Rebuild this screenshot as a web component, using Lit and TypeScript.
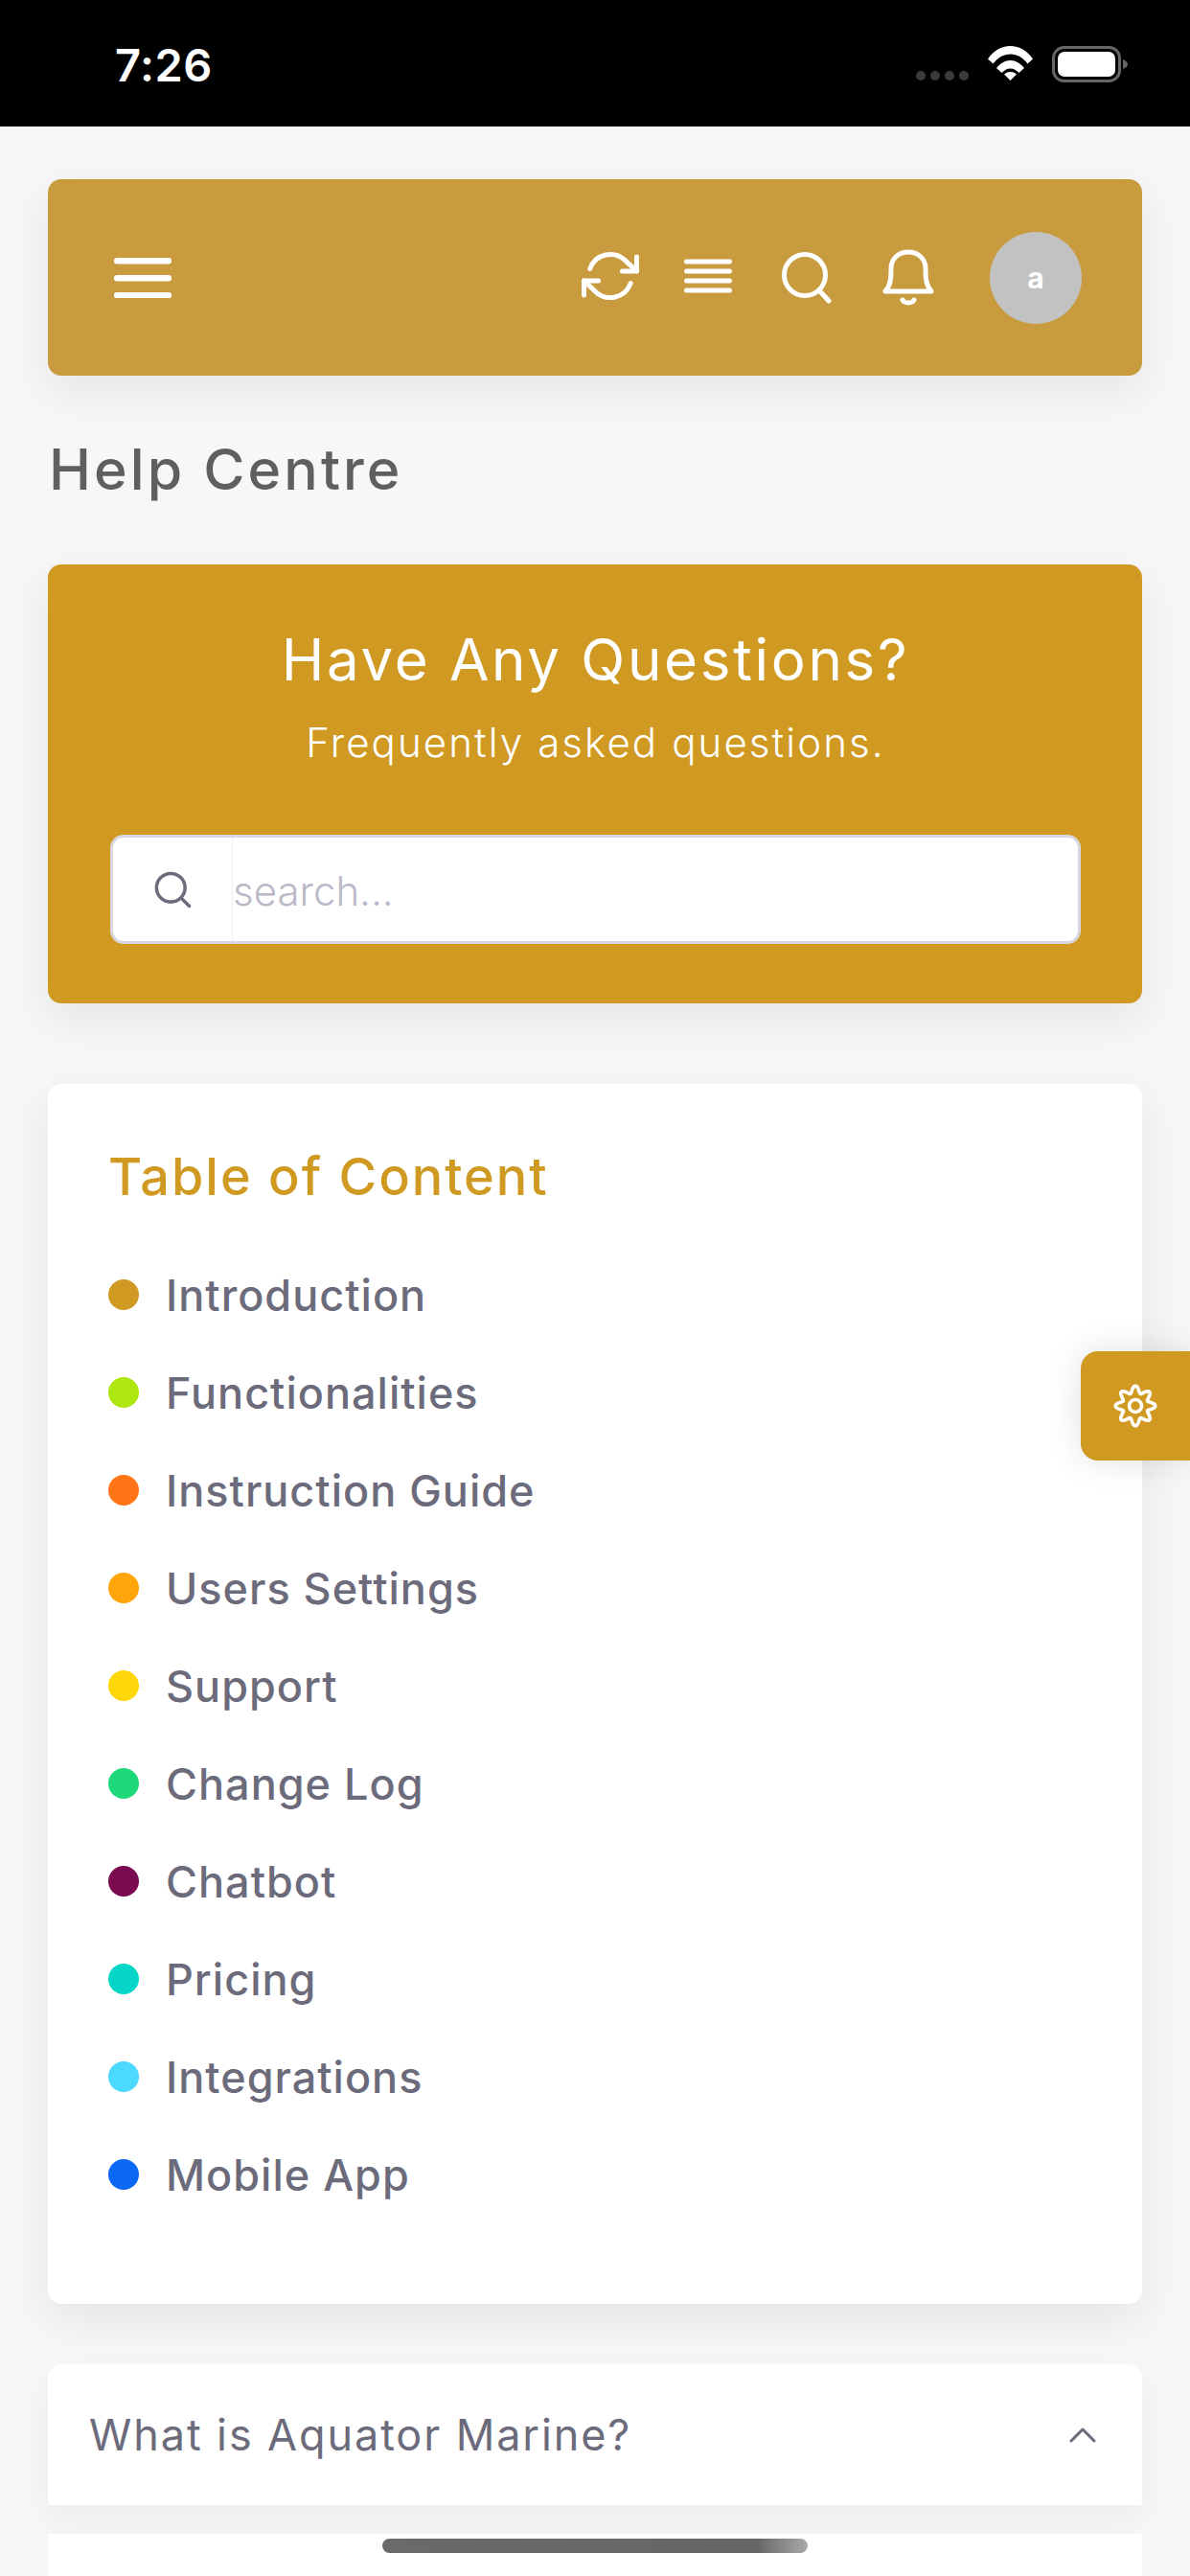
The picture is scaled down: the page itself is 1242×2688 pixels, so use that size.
import { LitElement, html, css, svg } from "lit";
import { customElement } from "lit/decorators.js";

const TOC: [string, string][] = [
  ["Introduction", "#d09a22"],
  ["Functionalities", "#aee60f"],
  ["Instruction Guide", "#ff7518"],
  ["Users Settings", "#ffa70a"],
  ["Support", "#ffd60a"],
  ["Change Log", "#1ed97a"],
  ["Chatbot", "#7a0a50"],
  ["Pricing", "#06d6c8"],
  ["Integrations", "#4cd9ff"],
  ["Mobile App", "#0a68f5"],
];

function gearPath(): string {
  const pts: string[] = [];
  const n = 96;
  for (let i = 0; i < n; i++) {
    const t = (i / n) * Math.PI * 2;
    const r = 17.2 + 3.6 * Math.cos(8 * t);
    pts.push(`${(24 + r * Math.sin(t)).toFixed(2)} ${(24 - r * Math.cos(t)).toFixed(2)}`);
  }
  return "M" + pts.join("L") + "Z";
}

@customElement("app-root")
export class AppRoot extends LitElement {
  static styles = css`
    :host {
      display: block;
      position: relative;
      width: 1242px;
      height: 2688px;
      overflow: hidden;
      background: #f7f7f7;
      font-family: Inter, "Noto Sans", sans-serif;
      color: #6c6b7b;
    }
    .status {
      height: 132px;
      background: #000;
      display: flex;
      align-items: center;
      padding: 0 64px 0 120px;
      box-sizing: border-box;
    }
    .time {
      color: #fff;
      font: 600 47px/1 Inter, "Liberation Sans", sans-serif;
      letter-spacing: 0.5px;
      margin-top: 2px;
      flex: 1;
    }
    .sig { display: flex; gap: 5px; margin-top: 26px; margin-right: 20px; }
    .sig i { width: 10px; height: 10px; border-radius: 50%; background: #3b3b3b; display: block; }
    .wifi { width: 47px; height: 36px; margin-right: 20px; display: block; }
    .batt { width: 80px; height: 38px; display: block; margin-top: 1px; }
    main {
      padding: 55px 50px 0;
      display: flex;
      flex-direction: column;
    }
    .header {
      height: 205px;
      background: #c99b3f;
      border-radius: 14px;
      box-shadow: 0 16px 50px rgba(0, 0, 0, 0.08);
      display: flex;
      align-items: center;
      padding: 0 63px 0 69px;
    }
    .burger { width: 60px; height: 42px; display: block; margin-right: auto; }
    .ic { display: block; }
    .refresh { width: 60px; height: 60px; margin-right: 47px; margin-top: -3px; }
    .lines { width: 50px; height: 40px; margin-right: 52px; margin-top: -3px; }
    .search { width: 52px; height: 54px; margin-right: 53px; }
    .bell { width: 54px; height: 60px; margin-right: 58px; }
    .avatar {
      width: 96px;
      height: 96px;
      border-radius: 50%;
      background: #c2c2c2;
      color: #fff;
      font: 700 30px/96px Inter, sans-serif;
      text-align: center;
    }
    h1 {
      margin: 60px 0 0 1px;
      font-weight: 450;
      font-size: 59px;
      line-height: 76px;
      letter-spacing: 3.1px;
      color: #5f5f5f;
    }
    .hero {
      margin-top: 61px;
      height: 458px;
      box-sizing: border-box;
      background: #d09a22;
      border-radius: 14px;
      box-shadow: 0 16px 50px rgba(0, 0, 0, 0.08);
      padding: 62px 64px 0 65px;
      color: #fff;
      text-align: center;
    }
    .hero h2 {
      margin: 0;
      font-weight: 400;
      font-size: 60px;
      line-height: 74px;
      letter-spacing: 2.7px;
    }
    .hero p {
      margin: 21px 0 0;
      font-weight: 300;
      font-size: 42px;
      line-height: 58px;
      letter-spacing: 2.1px;
    }
    .searchbox {
      margin-top: 67px;
      height: 114px;
      box-sizing: border-box;
      background: #fff;
      border: 3px solid #d8d6e0;
      border-radius: 14px;
      display: flex;
      align-items: center;
      overflow: hidden;
    }
    .addon {
      width: 125px;
      height: 100%;
      border-right: 1px solid #efeff3;
      display: flex;
      align-items: center;
      justify-content: center;
      box-sizing: border-box;
      flex: none;
    }
    .addon svg { width: 42px; height: 42px; display: block; }
    .ph { font-weight: 300; font-size: 42px; color: #b9b9c8; margin-top: 2px; }
    .toc {
      margin-top: 84px;
      height: 1273px;
      box-sizing: border-box;
      background: #fff;
      border-radius: 14px;
      box-shadow: 0 16px 50px rgba(0, 0, 0, 0.08);
      padding: 62px 63px 0;
    }
    .toc h3 {
      margin: 0 0 37px;
      font-weight: 450;
      font-size: 54px;
      line-height: 70px;
      letter-spacing: 2px;
      color: #d09a22;
    }
    .toc ul {
      list-style: none;
      margin: 0;
      padding: 0;
      display: flex;
      flex-direction: column;
    }
    .toc li {
      height: 102px;
      display: flex;
      align-items: center;
      gap: 28px;
      font-weight: 450;
      font-size: 45px;
      letter-spacing: 1px;
    }
    .toc li i { width: 32px; height: 32px; border-radius: 50%; display: block; flex: none; }
    .faq {
      margin-top: 63px;
      height: 147px;
      box-sizing: border-box;
      background: #fff;
      border-radius: 14px 14px 0 0;
      box-shadow: 0 15px 40px rgba(0, 0, 0, 0.05);
      display: flex;
      align-items: center;
      justify-content: space-between;
      padding: 0 48px 0 43px;
      font-size: 45px;
      letter-spacing: 1.9px;
    }
    .faq svg { width: 28px; height: 18px; display: block; }
    .faq.next { margin-top: 30px; border-radius: 0; box-shadow: none; }
    .tab {
      position: absolute;
      right: 0;
      top: 1410px;
      width: 114px;
      height: 114px;
      background: #d09a22;
      border-radius: 18px 0 0 18px;
      box-shadow: 0 0 36px rgba(0, 0, 0, 0.12);
      display: flex;
      align-items: center;
      justify-content: center;
    }
    .tab svg { width: 48px; height: 48px; display: block; }
    .home {
      position: absolute;
      left: 399px;
      top: 2649px;
      width: 444px;
      height: 15px;
      border-radius: 8px;
      background: linear-gradient(90deg, #6a6a6a 0%, #666 88%, #aaa 100%);
    }
  `;

  render() {
    return html`
      <div class="status">
        <div class="time">7:26</div>
        <div class="sig"><i></i><i></i><i></i><i></i></div>
        <svg class="wifi" viewBox="0 0 47 36" fill="#fff">
          <path d="M0 13.500C6 5 14 0 23.500 0S41 5 47 13.500L41.500 18.500C36.500 12 30.500 8.500 23.500 8.500S10.500 12 5.500 18.500Z"/>
          <path d="M9 23C13 18 18 15 23.500 15S34 18 38 23L32.500 28C30 25.300 27 23.500 23.500 23.500S17 25.300 14.500 28Z"/>
          <path d="M17 29.500C19 27.800 21 27 23.500 27S28 27.800 30 29.500L23.500 36Z"/>
        </svg>
        <svg class="batt" viewBox="0 0 80 38">
          <rect x="1.500" y="1.500" width="69" height="35" rx="11" fill="none" stroke="#666" stroke-width="3"/>
          <rect x="6" y="6" width="60" height="26" rx="7" fill="#fff"/>
          <path d="M74 14C77 15 79 17 79 19S77 23 74 24Z" fill="#666"/>
        </svg>
      </div>
      <main>
        <div class="header">
          <svg class="burger" viewBox="0 0 60 42" fill="#fff">
            <rect y="0" width="60" height="6.500" rx="3"/>
            <rect y="18" width="60" height="6.500" rx="3"/>
            <rect y="36" width="60" height="6.500" rx="3"/>
          </svg>
          <svg class="ic refresh" viewBox="0 0 24 24" fill="none" stroke="#fff" stroke-width="2" stroke-linecap="round" stroke-linejoin="round">
            <polyline points="23 4 23 10 17 10"/>
            <polyline points="1 20 1 14 7 14"/>
            <path d="M3.510 9a9 9 0 0 1 14.850-3.360L23 10M1 14l4.640 4.360A9 9 0 0 0 20.490 15"/>
          </svg>
          <svg class="ic lines" viewBox="0 0 50 40" fill="none" stroke="#fff" stroke-width="5" stroke-linecap="round">
            <path d="M2.500 5H47.500M2.500 15H47.500M2.500 25H47.500M2.500 35H47.500"/>
          </svg>
          <svg class="ic search" viewBox="0 0 52 54" fill="none" stroke="#fff" stroke-width="5" stroke-linecap="round">
            <circle cx="24" cy="24" r="21.500"/>
            <path d="M39 40L49 51"/>
          </svg>
          <svg class="ic bell" viewBox="0 0 54 60" fill="none" stroke="#fff" stroke-width="5" stroke-linecap="round" stroke-linejoin="round">
            <path d="M3 44H51C45 37 45 29 45 20C45 10 37 3 27 3S9 10 9 20C9 29 9 37 3 44Z"/>
            <path d="M21 53C23 57 31 57 33 53"/>
          </svg>
          <div class="avatar">a</div>
        </div>
        <h1>Help Centre</h1>
        <section class="hero">
          <h2>Have Any Questions?</h2>
          <p>Frequently asked questions.</p>
          <div class="searchbox">
            <div class="addon">
              <svg viewBox="0 0 24 24" fill="none" stroke="#6c6b7b" stroke-width="2" stroke-linecap="round">
                <circle cx="11" cy="11" r="8.500"/>
                <path d="M17.500 17.500L22 22"/>
              </svg>
            </div>
            <div class="ph">search...</div>
          </div>
        </section>
        <section class="toc">
          <h3>Table of Content</h3>
          <ul>
            ${TOC.map(([t, c]) => html`<li><i style="background:${c}"></i>${t}</li>`)}
          </ul>
        </section>
        <div class="faq">
          <span>What is Aquator Marine?</span>
          <svg viewBox="0 0 28 18" fill="none" stroke="#6c6b7b" stroke-width="3" stroke-linecap="round" stroke-linejoin="round">
            <path d="M2 15L14 3L26 15"/>
          </svg>
        </div>
        <div class="faq next"></div>
      </main>
      <div class="tab">
        <svg viewBox="0 0 48 48" fill="none" stroke="#fff" stroke-width="3.600" stroke-linejoin="round">
          ${svg`<path d=${gearPath()}/>`}
          <circle cx="24" cy="24" r="6.500"/>
        </svg>
      </div>
      <div class="home"></div>
    `;
  }
}
